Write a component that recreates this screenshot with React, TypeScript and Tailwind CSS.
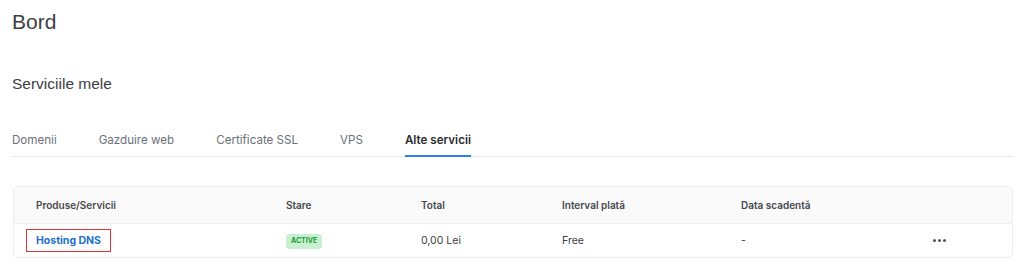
import React from 'react';

const tabs = ['Domenii', 'Gazduire web', 'Certificate SSL', 'VPS', 'Alte servicii'];
const cols = 'grid grid-cols-[250px_135px_141px_179px_192px_1fr] items-center pl-[22px]';

const App: React.FC = () => {
  return (
    <div className="w-[1024px] h-[271px] bg-white overflow-hidden font-['Inter',sans-serif]">
      <div className="px-[12px]">
        {/* Page title */}
        <h1 className="pt-[9px] text-[21px] leading-[26px] text-[#3c4044] font-['Liberation_Sans',Arial,sans-serif]">
          Bord
        </h1>
        <h2 className="mt-[39px] text-[15.5px] leading-[20px] text-[#3c4044] font-['Liberation_Sans',Arial,sans-serif]">
          Serviciile mele
        </h2>

        {/* Tabs */}
        <div className="mt-[38px] flex gap-[42px] border-b border-[#e6e8eb] w-[1002px]">
          {tabs.map((t, i) => {
            const active = i === tabs.length - 1;
            return (
              <div
                key={t}
                className={`pb-[7px] text-[11.6px] leading-[16px] border-b-2 -mb-px ${
                  active ? 'border-[#2f80e0] text-[#2b2d30] font-semibold' : 'border-transparent text-[#6b7078]'
                }`}
              >
                {t}
              </div>
            );
          })}
        </div>

        {/* Services table */}
        <div className="mt-[29px] ml-px w-[1000px] rounded-[5px] border border-[#ececec] overflow-hidden">
          <div className={`${cols} h-[37px] bg-[#fafafa] border-b border-[#efefef] text-[10px] font-semibold text-[#45484d]`}>
            <div>Produse/Servicii</div>
            <div>Stare</div>
            <div>Total</div>
            <div>Interval plată</div>
            <div>Data scadentă</div>
            <div />
          </div>
          <div className={`${cols} h-[33px] text-[10.5px] text-[#3a3d42]`}>
            <div>
              <span className="-ml-[10px] inline-block border-[1.5px] border-[#e8323a] px-[9px] py-[3px] text-[10.5px] font-bold text-[#1c6fce]">
                Hosting DNS
              </span>
            </div>
            <div>
              <span className="inline-flex items-center h-[15px] px-[5px] rounded-[4px] bg-[#c6f0cf] text-[7px] font-bold text-[#1f9a3d]">
                ACTIVE
              </span>
            </div>
            <div>0,00 Lei</div>
            <div>Free</div>
            <div>-</div>
            <div className="flex gap-[2px]">
              <span className="w-[3px] h-[3px] rounded-full bg-[#555]" />
              <span className="w-[3px] h-[3px] rounded-full bg-[#555]" />
              <span className="w-[3px] h-[3px] rounded-full bg-[#555]" />
            </div>
          </div>
        </div>
      </div>
    </div>
  );
};

export default App;
